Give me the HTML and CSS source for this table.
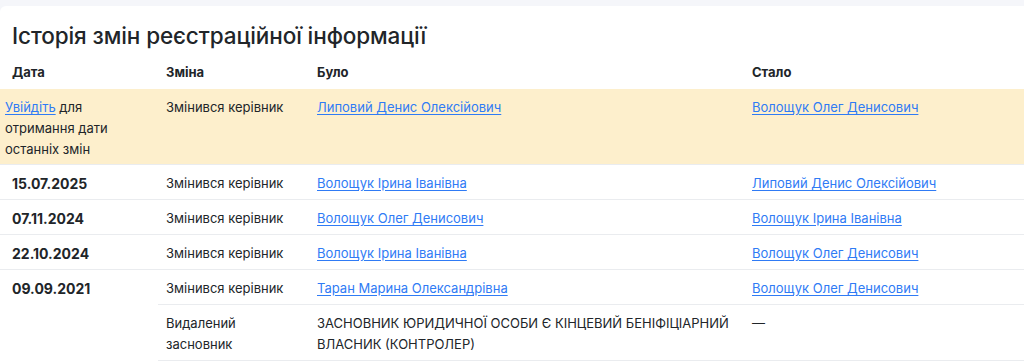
FILE: index.html
```html
<!DOCTYPE html>
<html lang="uk">
<head>
<meta charset="utf-8">
<link rel="stylesheet" href="styles.css">
</head>
<body>
<div class="page">
  <section class="card">
    <h2 class="title">Історія змін реєстраційної інформації</h2>
    <table class="history">
      <colgroup>
        <col class="c-date"><col class="c-change"><col class="c-was"><col class="c-now">
      </colgroup>
      <thead>
        <tr>
          <th class="date">Дата</th>
          <th>Зміна</th>
          <th>Було</th>
          <th>Стало</th>
        </tr>
      </thead>
      <tbody>
        <tr class="locked">
          <td class="login"><a href="#">Увійдіть</a> для отримання дати останніх змін</td>
          <td>Змінився керівник</td>
          <td><a href="#">Липовий Денис Олексійович</a></td>
          <td><a href="#">Волощук Олег Денисович</a></td>
        </tr>
        <tr>
          <td class="date">15.07.2025</td>
          <td>Змінився керівник</td>
          <td><a href="#">Волощук Ірина Іванівна</a></td>
          <td><a href="#">Липовий Денис Олексійович</a></td>
        </tr>
        <tr>
          <td class="date">07.11.2024</td>
          <td>Змінився керівник</td>
          <td><a href="#">Волощук Олег Денисович</a></td>
          <td><a href="#">Волощук Ірина Іванівна</a></td>
        </tr>
        <tr>
          <td class="date">22.10.2024</td>
          <td>Змінився керівник</td>
          <td><a href="#">Волощук Ірина Іванівна</a></td>
          <td><a href="#">Волощук Олег Денисович</a></td>
        </tr>
        <tr>
          <td class="date" rowspan="2">09.09.2021</td>
          <td>Змінився керівник</td>
          <td><a href="#">Таран Марина Олександрівна</a></td>
          <td><a href="#">Волощук Олег Денисович</a></td>
        </tr>
        <tr>
          <td>Видалений засновник</td>
          <td>ЗАСНОВНИК ЮРИДИЧНОЇ ОСОБИ Є КІНЦЕВИЙ БЕНІФІЦІАРНИЙ ВЛАСНИК (КОНТРОЛЕР)</td>
          <td>—</td>
        </tr>
      </tbody>
    </table>
  </section>
</div>
</body>
</html>
```

FILE: styles.css
```css
html, body {
  margin: 0;
  padding: 0;
  background: #f5f6fa;
}

body {
  font-family: Inter, "Liberation Sans", Arial, sans-serif;
  color: #212529;
  font-size: 13px;
  line-height: 21px;
}

.page {
  padding-top: 6px;
}

.card {
  background: #ffffff;
  border-top-left-radius: 6px;
  min-height: 357px;
}

.title {
  margin: 0;
  padding: 16px 12px 6px;
  font-size: 22.5px;
  line-height: 28px;
  font-weight: 500;
  letter-spacing: -0.1px;
}

.history {
  width: 100%;
  border-collapse: collapse;
  table-layout: fixed;
}

.c-date { width: 158px; }
.c-change { width: 151px; }
.c-was { width: 435px; }
.c-now { width: auto; }

.history th {
  text-align: left;
  font-weight: 700;
  padding: 6px 8px 6px;
}

.history td {
  padding: 8px 8px 5px;
  vertical-align: top;
  border-top: 1px solid #eaecef;
}

.history thead th { border: 0; }

.history th.date,
.history td.date {
  padding-left: 12px;
  font-weight: 700;
}

.history td.date {
  font-size: 14px;
}

.history tr.locked td {
  background: #fdefcc;
  border-top: 0;
  padding-top: 8px;
  padding-bottom: 4px;
}

.history tr.locked td.login {
  padding-left: 5px;
}

.history tbody tr:last-child td {
  border-bottom: 1px solid #eaecef;
}

.history a {
  color: #2f7bf5;
  text-decoration: underline;
  text-underline-offset: 2px;
}
```
